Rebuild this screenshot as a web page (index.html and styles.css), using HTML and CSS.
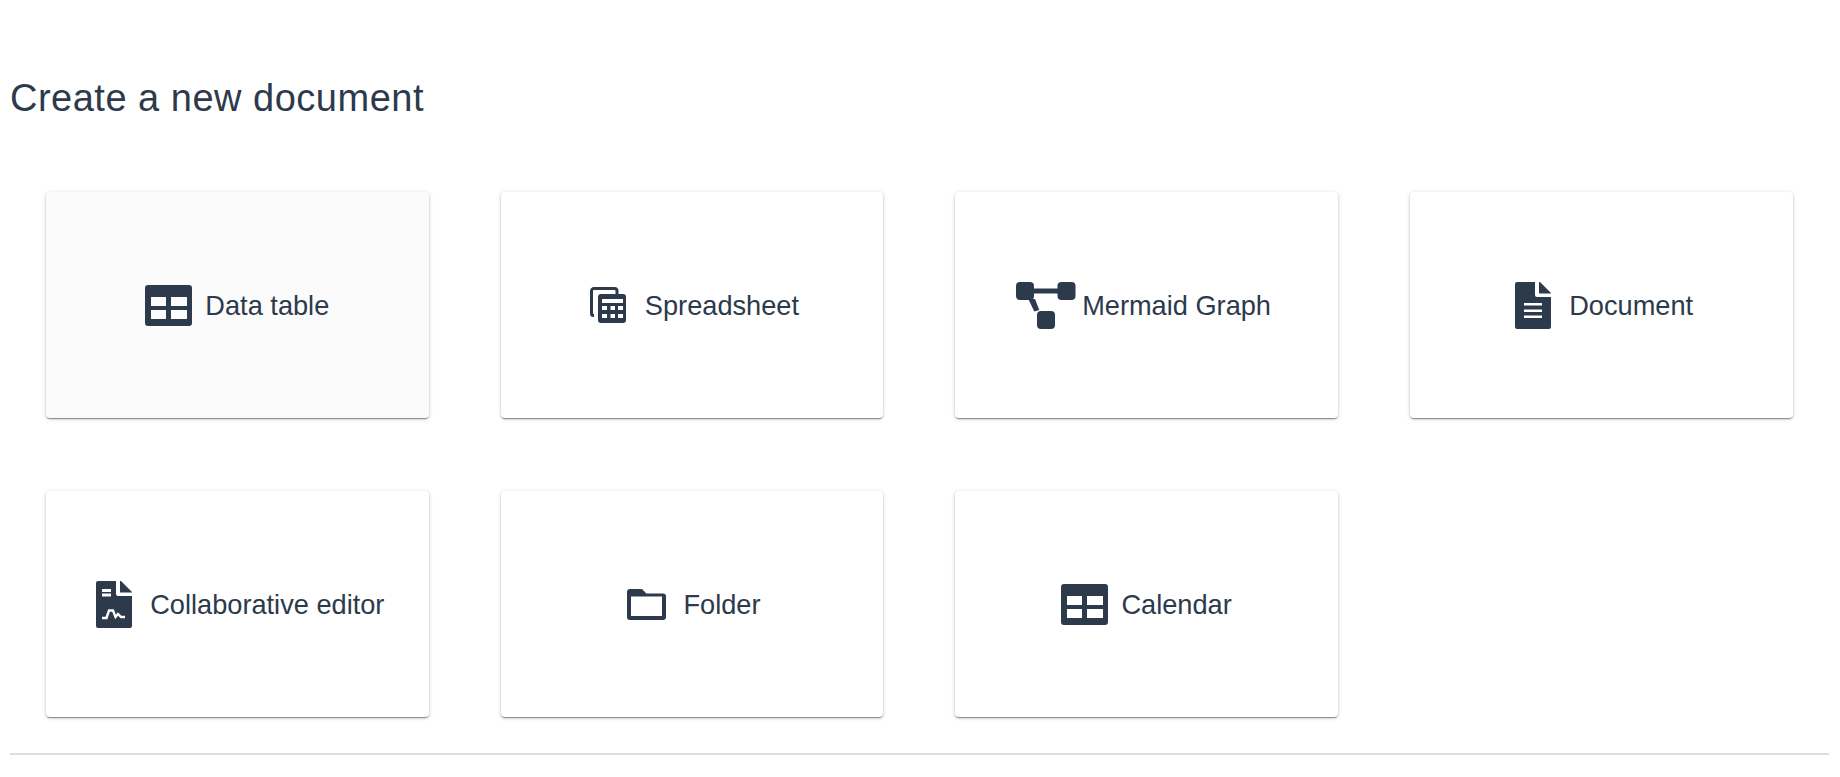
FILE: index.html
```html
<!DOCTYPE html>
<html lang="en">
<head>
<meta charset="utf-8">
<title>Create a new document</title>
<link rel="stylesheet" href="styles.css">
</head>
<body>
<main class="page">
  <h1 class="title">Create a new document</h1>
  <div class="grid">
    <div class="cell"><div class="card card-hover">
      <span class="icon-box"><svg class="icon i-table" viewBox="0 0 47 41"><path fill-rule="evenodd" d="M3 0h41a3 3 0 0 1 3 3v35a3 3 0 0 1-3 3H3a3 3 0 0 1-3-3V3a3 3 0 0 1 3-3zM6 12v9h15v-9zM26 12v9h16v-9zM6 25v9h15v-9zM26 25v9h16v-9z"/></svg></span>
      <span class="label">Data table</span>
    </div></div>
    <div class="cell"><div class="card">
      <span class="icon-box"><svg class="icon i-sheet" viewBox="0 0 36 36"><path class="line" d="M4 28.500H3.500A2 2 0 0 1 1.500 26.500V4A2.500 2.500 0 0 1 4 1.500H24.500A2.500 2.500 0 0 1 27 4V7"/><path fill-rule="evenodd" d="M11 7h22a3 3 0 0 1 3 3v23a3 3 0 0 1-3 3H11a3 3 0 0 1-3-3V10a3 3 0 0 1 3-3zM12 12v4h21v-4zM12 19v4h5v-4zM20.500 19v4h4.500v-4zM28 19v4h5v-4zM12 27v4h5v-4zM20.500 27v4h4.500v-4zM28 27v4h5v-4z"/></svg></span>
      <span class="label">Spreadsheet</span>
    </div></div>
    <div class="cell"><div class="card">
      <span class="icon-box"><svg class="icon i-graph" viewBox="0 0 60 47"><rect x="0" y="0" width="18" height="18" rx="4"/><rect x="41.500" y="0" width="18" height="18" rx="4"/><rect x="21" y="29" width="18" height="18" rx="4"/><path d="M16 6.500h27v5H16zM12.300 17l6.700 0 4.300 11-5 1.500z"/></svg></span>
      <span class="label">Mermaid Graph</span>
    </div></div>
    <div class="cell"><div class="card">
      <span class="icon-box"><svg class="icon i-doc" viewBox="0 0 36 47"><path fill-rule="evenodd" d="M2 0h18v13a2 2 0 0 0 2 2h14v30a2 2 0 0 1-2 2H2a2 2 0 0 1-2-2V2a2 2 0 0 1 2-2zM9 21v2.500h18V21zM9 27.500v2.500h18v-2.500zM9 33.500v2.500h18v-2.500z"/><path d="M24 0h1l11 11v0.500H24z"/></svg></span>
      <span class="label">Document</span>
    </div></div>
    <div class="cell"><div class="card">
      <span class="icon-box"><svg class="icon i-doc" viewBox="0 0 36 47"><path fill-rule="evenodd" d="M2 0h18v13a2 2 0 0 0 2 2h14v30a2 2 0 0 1-2 2H2a2 2 0 0 1-2-2V2a2 2 0 0 1 2-2zM6 8v3h9V8zM6 12.500v3h9v-3z"/><path d="M24 0h1l11 11v0.500H24z"/><path class="wave" d="M6 37h4.500L13 29.500h4l2.500 6.500 2.500-3 3 3h4"/></svg></span>
      <span class="label">Collaborative editor</span>
    </div></div>
    <div class="cell"><div class="card">
      <span class="icon-box"><svg class="icon i-folder" viewBox="0 0 39 31"><path fill-rule="evenodd" d="M3 0h11a3 3 0 0 1 2 1l3.400 3.400h16.600a3 3 0 0 1 3 3v20.600a3 3 0 0 1-3 3H3a3 3 0 0 1-3-3V3a3 3 0 0 1 3-3zM4 7.500v19.500h31V7.500z"/></svg></span>
      <span class="label">Folder</span>
    </div></div>
    <div class="cell"><div class="card">
      <span class="icon-box"><svg class="icon i-table" viewBox="0 0 47 41"><path fill-rule="evenodd" d="M3 0h41a3 3 0 0 1 3 3v35a3 3 0 0 1-3 3H3a3 3 0 0 1-3-3V3a3 3 0 0 1 3-3zM6 12v9h15v-9zM26 12v9h16v-9zM6 25v9h15v-9zM26 25v9h16v-9z"/></svg></span>
      <span class="label">Calendar</span>
    </div></div>
  </div>
  <hr class="rule">
</main>
</body>
</html>
```
FILE: styles.css
```css
* { box-sizing: border-box; }
html, body { margin: 0; padding: 0; background: #fff; }
body {
  height: 777px;
  overflow: hidden;
  font-family: "Liberation Sans", Arial, sans-serif;
  color: #2c3a4b;
}
.page { padding: 78px 11px 0 10px; }
.title {
  margin: 0;
  font-size: 38px;
  line-height: 40px;
  font-weight: 400;
  letter-spacing: 0.5px;
}
.grid {
  margin-top: 74.4px;
  padding-right: 0.5px;
  display: grid;
  grid-template-columns: repeat(4, 1fr);
  row-gap: 72.8px;
}
.cell { padding: 0 36px; }
.card {
  height: 226px;
  display: flex;
  align-items: center;
  justify-content: center;
  gap: 13px;
  background: #fff;
  border-radius: 4px;
  box-shadow: 0 2px 1px -1px rgba(0,0,0,.3), 0 1px 2px 0 rgba(0,0,0,.2), 0 1px 5px 0 rgba(0,0,0,.14);
}
.card-hover { background: #fbfbfb; }
.label { font-size: 27.2px; line-height: 32px; padding-top: 1px; }
.icon-box {
  flex: none;
  width: 47px;
  display: flex;
  justify-content: center;
}
.icon { display: block; flex: none; fill: #2c3a4b; }
.line { fill: none; stroke: #2c3a4b; stroke-width: 3; }
.wave { fill: none; stroke: #fff; stroke-width: 2.4; }
.i-table { width: 47px; height: 41px; }
.i-sheet { width: 36px; height: 36px; }
.i-graph { width: 60px; height: 47px; }
.i-doc { width: 36px; height: 47px; }
.i-folder { width: 39px; height: 31px; }
.rule {
  margin: 36px 0 0;
  border: 0;
  height: 2px;
  background: #dedede;
}
```
